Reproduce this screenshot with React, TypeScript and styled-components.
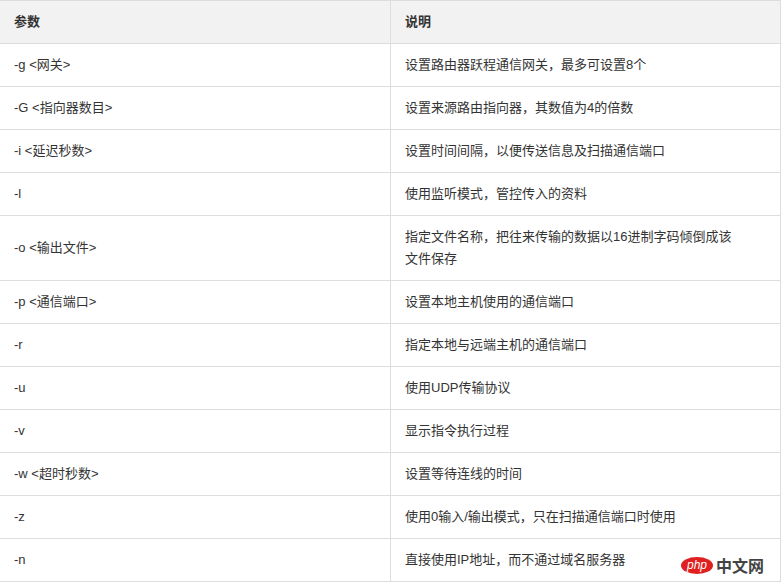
import * as React from 'react';
import styled, {createGlobalStyle} from 'styled-components';

const Global = createGlobalStyle`
  body { margin: 0; background: #fff; font-family: "Liberation Sans", "Noto Sans CJK SC", sans-serif; }
`;

const Table = styled.table`
  width: 781px;
  border-collapse: collapse;
  font-size: 13px;
  color: #333;
  td, th { border: 1px solid #ddd; padding: 0 14px; text-align: left; vertical-align: middle; line-height: 22px; }
  th { background: #f2f2f2; height: 42px; font-weight: bold; }
  td { height: 42px; }
  td:first-child, th:first-child { width: 362px; border-left: none; }
  td:last-child { padding-right: 40px; }
`;

const Desc = styled.td<{$tall?: boolean}>`
  ${({$tall}) => $tall && `height: 64px !important;`}
`;

const Wrap = styled.div`
  position: relative;
`;

const Mark = styled.div`
  position: absolute;
  right: 20px;
  bottom: 5px;
  display: flex;
  align-items: center;
  gap: 3px;
`;

const Php = styled.span`
  background: #e02020;
  color: #fff;
  border-radius: 50%;
  width: 32px;
  height: 17px;
  font-size: 12px;
  display: flex;
  align-items: center;
  justify-content: center;
  font-style: italic;
`;

const Cn = styled.span`
  font-size: 16px;
  color: #444;
  font-weight: bold;
  font-family: "Noto Sans CJK SC", sans-serif;
`;

const rows: [string, string][] = [
  ['-g <网关>', '设置路由器跃程通信网关，最多可设置8个'],
  ['-G <指向器数目>', '设置来源路由指向器，其数值为4的倍数'],
  ['-i <延迟秒数>', '设置时间间隔，以便传送信息及扫描通信端口'],
  ['-l', '使用监听模式，管控传入的资料'],
  ['-o <输出文件>', '指定文件名称，把往来传输的数据以16进制字码倾倒成该文件保存'],
  ['-p <通信端口>', '设置本地主机使用的通信端口'],
  ['-r', '指定本地与远端主机的通信端口'],
  ['-u', '使用UDP传输协议'],
  ['-v', '显示指令执行过程'],
  ['-w <超时秒数>', '设置等待连线的时间'],
  ['-z', '使用0输入/输出模式，只在扫描通信端口时使用'],
  ['-n', '直接使用IP地址，而不通过域名服务器'],
];

export default function App() {
  return (
    <Wrap>
      <Global />
      <Table>
        <thead>
          <tr><th>参数</th><th>说明</th></tr>
        </thead>
        <tbody>
          {rows.map(([a, b]) => (
            <tr key={a}>
              <td>{a}</td>
              <Desc $tall={b.length > 24}>{b}</Desc>
            </tr>
          ))}
        </tbody>
      </Table>
      <Mark><Php>php</Php><Cn>中文网</Cn></Mark>
    </Wrap>
  );
}
